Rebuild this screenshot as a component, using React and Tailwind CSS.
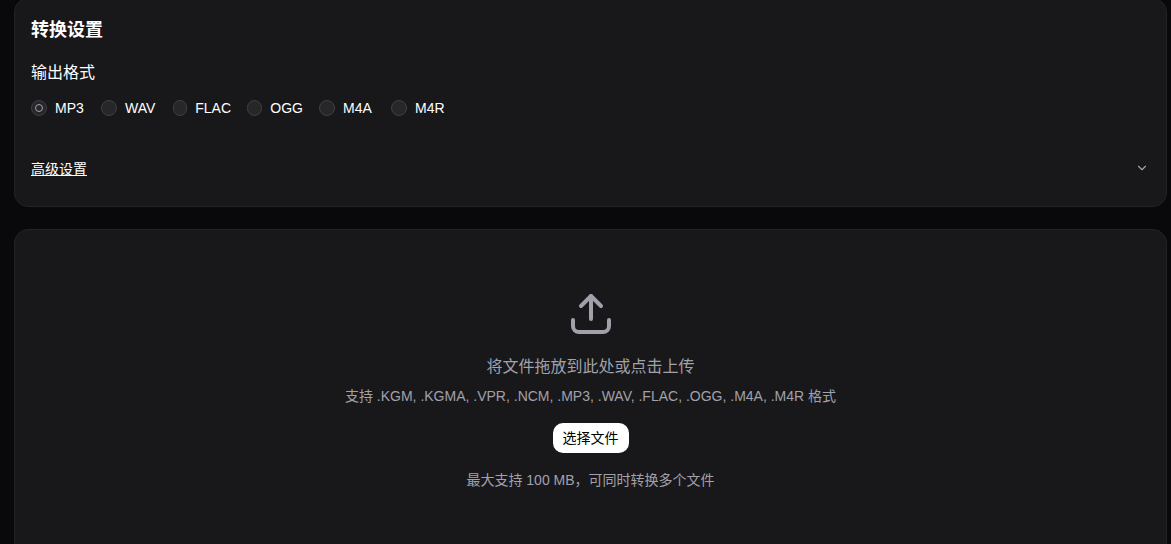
import { ChevronDown } from "lucide-react";

const formats = [
  { name: "MP3", width: "w-[54px]" },
  { name: "WAV", width: "w-[56px]" },
  { name: "FLAC", width: "w-[58px]" },
  { name: "OGG", width: "w-[56px]" },
  { name: "M4A", width: "w-[56px]" },
  { name: "M4R", width: "w-[56px]" },
];

const UploadIcon = () => (
  <svg viewBox="0 0 48 48" fill="none" stroke="currentColor" strokeWidth="4" strokeLinecap="round" strokeLinejoin="round" className="size-12 text-[#a1a1aa]">
    <path d="M24 30V7" />
    <path d="M14 17L24 7l10 10" />
    <path d="M6 31v6a6 6 0 0 0 6 6h24a6 6 0 0 0 6-6v-6" />
  </svg>
);

const App = () => {
  return (
    <div className="h-[544px] overflow-hidden bg-[#09090b] pl-[14px] pr-[4px] font-['Liberation_Sans','Noto_Sans_CJK_SC',sans-serif] text-white">
      <section className="-mt-[2px] h-[209px] rounded-[14px] border border-[#232326] bg-[#18181b] px-4 pt-[17px]">
        <h2 className="text-lg leading-7 font-bold">转换设置</h2>
        <p className="mt-[17px] text-base leading-6">输出格式</p>
        <div className="mt-[13px] flex items-center gap-[16px]">
          {formats.map((format, i) => (
            <label key={format.name} className={`flex items-center gap-[8px] text-sm leading-5 ${format.width}`}>
              <span className="flex size-4 items-center justify-center rounded-full border border-[#3f3f46] bg-[#27272a]">
                {i === 0 && <span className="size-2 rounded-full border border-[#a1a1aa]" />}
              </span>
              {format.name}
            </label>
          ))}
        </div>
        <div className="mt-[41px] flex items-center justify-between">
          <span className="text-sm leading-5 underline">高级设置</span>
          <ChevronDown className="mr-[1px] mt-[-3px] size-[14px] text-[#a1a1aa]" />
        </div>
      </section>
      <section className="mt-[22px] flex h-[340px] flex-col items-center rounded-[14px] border border-[#232326] bg-[#18181b] pt-[59px]">
        <UploadIcon />
        <p className="mt-[18px] text-base leading-6 text-[#a1a1aa]">将文件拖放到此处或点击上传</p>
        <p className="mt-[7px] text-sm leading-5 text-[#a1a1aa]">支持 .KGM, .KGMA, .VPR, .NCM, .MP3, .WAV, .FLAC, .OGG, .M4A, .M4R 格式</p>
        <button className="mt-[17px] h-[30px] w-[76px] rounded-[10px] bg-white text-sm text-black">选择文件</button>
        <p className="mt-[17px] text-sm leading-5 text-[#a1a1aa]">最大支持 100 MB，可同时转换多个文件</p>
      </section>
    </div>
  );
};

export default App;
